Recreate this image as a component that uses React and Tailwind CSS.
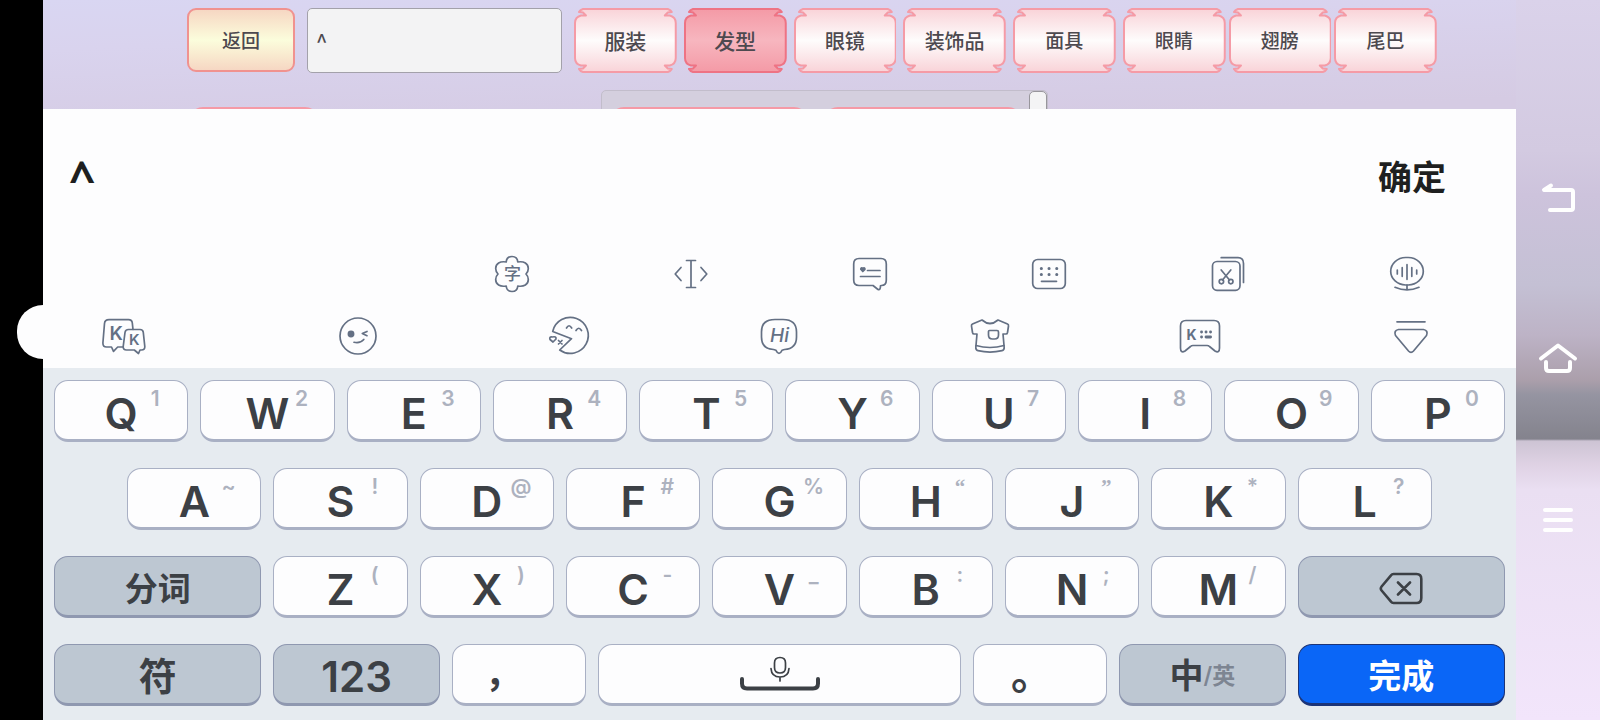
import React, { useState } from "react";
import clsx from "clsx";

const TABS = [
  { label: "服装", size: "text-[21px]", gap: "mr-[7px]" },
  { label: "发型", size: "text-[21px]", gap: "mr-[7px]" },
  { label: "眼镜", size: "text-[20px]", gap: "mr-[7px]" },
  { label: "装饰品", size: "text-[20px]", gap: "mr-[7px]" },
  { label: "面具", size: "text-[19px]", gap: "mr-[7px]" },
  { label: "眼睛", size: "text-[19px]", gap: "mr-[3px]" },
  { label: "翅膀", size: "text-[19px]", gap: "mr-[3px]" },
  { label: "尾巴", size: "text-[19px]", gap: "" },
];

const ROW_1 = ["Q1", "W2", "E3", "R4", "T5", "Y6", "U7", "I8", "O9", "P0"];
const ROW_2 = ["A~", "S!", "D@", "F#", "G%", "H“", "J”", "K*", "L?"];
const ROW_3 = ["Z(", "X)", "C-", "V_", "B:", "N;", "M/"];

const KEY_TONES = {
  light: "bg-[#fdfdfe] border-[#a9b0c4] text-[#3c4045]",
  grey: "bg-[#bdc7d2] border-[#8f98b0] text-[#3c4045]",
  blue: "bg-[#0a66f7] border-[#1c3478] text-white",
};

function TabShape({ active }) {
  const id = active ? "tab-on" : "tab-off";
  return (
    <svg className="absolute inset-0 h-full w-full" viewBox="0 0 103 65" preserveAspectRatio="none" aria-hidden="true">
      <defs>
        <linearGradient id={id} x1="0" y1="0" x2="0" y2="1">
          <stop offset="0" stopColor={active ? "#f49aa6" : "#f9d3d8"} />
          <stop offset="0.5" stopColor={active ? "#f7b6bf" : "#fefcfc"} />
          <stop offset="1" stopColor={active ? "#f49aa6" : "#f9d3d8"} />
        </linearGradient>
      </defs>
      <path
        d="M9 1H94Q97 2 98 4L94 4.500L91 7.500H96Q102 9 102 15V50Q102 56 96 57.500H91L94 60.500L98 61Q97 63 94 64H9Q6 63 5 61L9 60.500L12 57.500H7Q1 56 1 50V15Q1 9 7 7.500H12L9 4.500L5 4Q6 2 9 1Z"
        fill={`url(#${id})`}
        stroke={active ? "#ee7384" : "#f59ba6"}
        strokeWidth="2"
        strokeLinejoin="round"
      />
    </svg>
  );
}

function Icon({ children, size = 40, width = 1.7 }) {
  return (
    <svg
      width={size}
      height={size}
      viewBox={`0 0 ${size} ${size}`}
      fill="none"
      stroke="currentColor"
      strokeWidth={width}
      strokeLinecap="round"
      strokeLinejoin="round"
      aria-hidden="true"
    >
      {children}
    </svg>
  );
}

const TOOLS_TOP = [
  {
    name: "花漾字",
    icon: (
      <Icon>
        <path d="M14.200 8C14.500 4 17 2.500 20 2.500S25.500 4 25.800 8C32 7 36.300 9.500 36.300 14.500C36.300 17 35.500 18.500 34 20C35.500 21.500 36.300 23 36.300 25.500C36.300 30.500 32 33 25.800 32C25.500 36 23 37.500 20 37.500S14.500 36 14.200 32C8 33 3.700 30.500 3.700 25.500C3.700 23 4.500 21.500 6 20C4.500 18.500 3.700 17 3.700 14.500C3.700 9.500 8 7 14.200 8Z" />
        <text x="20.500" y="26" textAnchor="middle" fill="currentColor" stroke="none" fontSize="17" fontWeight="500">字</text>
      </Icon>
    ),
  },
  {
    name: "光标",
    icon: (
      <Icon>
        <path d="M15.500 6.500H24.500M20 6.500V33.500M15.500 33.500H24.500M10 13.500L4.200 20L10 26.500M30 13.500L35.800 20L30 26.500" />
      </Icon>
    ),
  },
  {
    name: "常用语",
    icon: (
      <Icon>
        <path d="M9 4.500H31Q36.300 4.500 36.300 10V26Q36.300 31.500 31.500 31.500L30.500 31.800Q30.500 36.500 28 35.500L23 31.500H9Q3.700 31.500 3.700 26V10Q3.700 4.500 9 4.500Z" />
        <path d="M17.500 16.500H30M10.500 22.500H30" />
        <path d="M12.800 17.500L10.800 15.300Q10.800 13.300 12.800 14.200Q15 13.200 14.900 15.300Z" fill="currentColor" />
      </Icon>
    ),
  },
  {
    name: "键盘",
    icon: (
      <Icon>
        <rect x="3.700" y="5.500" width="32.600" height="29" rx="5" />
        <path d="M12.500 27.300H27.500" />
        <path d="M12.300 14.500H12.400M20 14.500H20.100M27.700 14.500H27.800M12.300 20.500H12.400M20 20.500H20.100M27.700 20.500H27.800" strokeWidth="3" />
      </Icon>
    ),
  },
  {
    name: "剪贴板",
    icon: (
      <Icon>
        <rect x="4.500" y="7.500" width="27.500" height="28.800" rx="4.500" />
        <path d="M13.200 3.700H30Q35.500 3.700 35.500 9.500V28.500M13.200 16L21.500 26M22.800 16L14.500 26" />
        <circle cx="13.400" cy="27.600" r="2.200" />
        <circle cx="22.800" cy="27.600" r="2.200" />
      </Icon>
    ),
  },
  {
    name: "语音",
    icon: (
      <Icon>
        <rect x="3.700" y="3.500" width="32.600" height="27.500" rx="15" />
        <path d="M10.300 16V20M15.200 13.700V22.300M20 10.700V25.300M24.800 13.700V22.300M29.700 16V20M20 31V36M8 33.300Q20 38.500 32 33.300" />
      </Icon>
    ),
  },
];

const TOOLS_BOTTOM = [
  {
    name: "表情",
    icon: (
      <Icon size={44}>
        <circle cx="22" cy="22" r="18" />
        <circle cx="15" cy="20" r="2.600" fill="currentColor" />
        <path d="M31 17.500L26.300 19.500L31 21.700M18 28.300Q24 29.800 27.800 25.500" />
      </Icon>
    ),
  },
  {
    name: "斗图",
    icon: (
      <Icon size={44}>
        <path d="M5.700 17.500A18 18 0 1 1 12.700 36L24.500 24.700Z" />
        <path d="M19.500 14Q22 9.500 24.700 14M29 16.500Q31.700 12 34.500 16.500M11.500 26.500L15 30M15 26.500L11.500 30" />
        <path d="M6 28L3 25.500Q2 22.500 5.300 23Q9.500 22 9 25Z" />
      </Icon>
    ),
  },
  {
    name: "打招呼",
    icon: (
      <Icon size={44}>
        <path d="M18 5.500H26C35 5.500 39.500 9 39.500 18V23C39.500 31 35 35 27.500 35.500L25 36.300Q22 42.500 19 36.300L16.500 35.500C9 35 4.500 31 4.500 23V18C4.500 9 9 5.500 18 5.500Z" />
        <text x="22.500" y="28" textAnchor="middle" fill="currentColor" stroke="none" fontSize="19" fontStyle="italic" fontWeight="500">Hi</text>
      </Icon>
    ),
  },
  {
    name: "皮肤",
    icon: (
      <Icon size={44}>
        <path d="M14 6L4.500 10Q3.300 10.500 3.500 12L4.500 18.500Q4.800 20 6 20H9L7.800 33.500Q7.700 36 10 36.700Q22 39.500 34 36.700Q36.300 36 36.200 33.500L35 20H38Q39.200 20 39.500 18.500L40.500 12Q40.700 10.500 39.500 10L30 6Q22 13 14 6Z" />
        <path d="M8 31.500Q22 35.500 36 31.500M21.500 16.500H29Q30.500 16.500 30.500 18V21Q30.500 25 26.500 25H24.500Q20.500 25 20.500 21V17.500Q20.500 16.500 21.500 16.500Z" />
      </Icon>
    ),
  },
  {
    name: "游戏键盘",
    icon: (
      <Icon size={44}>
        <path d="M8 6.500H36Q41.500 6.500 41.500 12V34Q41.500 39.500 37 37L31.500 32.500Q30.500 31.500 29 31.500H15Q13.500 31.500 12.500 32.500L7 37Q2.500 39.500 2.500 34V12Q2.500 6.500 8 6.500Z" />
        <text x="8.500" y="25.800" fill="currentColor" stroke="none" fontSize="14" fontWeight="700">K</text>
        <path d="M23.500 18H23.600M28 18H28.100M32.500 18H32.600M23.500 23H23.600M28 23H32.600" strokeWidth="2.800" />
      </Icon>
    ),
  },
  {
    name: "收起",
    icon: (
      <Icon size={44}>
        <path d="M8 7.800H36" />
        <path d="M9.500 15.500H34.500Q39.500 16.500 37.500 21.500L24.500 37Q22 39.800 19.500 37L6.500 21.500Q4.500 16.500 9.500 15.500Z" />
      </Icon>
    ),
  },
];

function KIcon() {
  return (
    <Icon size={44}>
      <path d="M21 33H15.700L11.500 37.300L9.500 33H4.500Q.9 33 .9 29L2.500 9.500Q2.800 5.700 7 5.700H26.500Q30 5.700 30.300 9L31 15.300" />
      <path d="M26.500 15.500H38Q41 15.500 41.300 18.500L42.800 32.500Q43 36 39.500 36L38 36L36.500 39.500L32.300 36H24.500Q21 36 21.200 32.500L23 18.500Q23.400 15.500 26.500 15.500Z" />
      <text x="7.500" y="26" fill="currentColor" stroke="none" fontSize="19" fontWeight="600">K</text>
      <text x="27" y="31" fill="currentColor" stroke="none" fontSize="15" fontWeight="600">K</text>
    </Icon>
  );
}

function Key({ children, hint, tone = "light", className, label }) {
  return (
    <div className={clsx("px-1.5", className)}>
      <button
        type="button"
        aria-label={label}
        className={clsx(
          "relative flex h-[62px] w-full items-center justify-center rounded-[14px] border border-b-[3px] font-semibold",
          KEY_TONES[tone],
        )}
      >
        {children}
        {hint && (
          <span
            className={clsx(
              "absolute right-4 top-1 w-8 text-center text-[21px] leading-[28px] text-[#adb2bf]",
              "“”".includes(hint) && "font-['Liberation_Serif',serif]",
            )}
          >
            {hint}
          </span>
        )}
      </button>
    </div>
  );
}

function LetterKeys({ keys }) {
  return keys.map((k) => (
    <Key key={k} hint={k[1]} className="w-[10%]">
      <span className="pt-1.5 text-[43px] leading-none">{k[0]}</span>
    </Key>
  ));
}

function GameBar({ text, setText }) {
  const [tab, setTab] = useState("发型");
  return (
    <header className="flex h-[109px] flex-col overflow-hidden font-['Noto_Sans_CJK_SC',sans-serif] font-medium text-[#4d494f]">
      <div className="ml-36 mr-[79px] flex pt-2">
        <button
          type="button"
          className="mr-3 h-16 w-[108px] shrink-0 rounded-[9px] border-2 border-[#f0928f] bg-linear-to-b from-[#f6d7c3] via-[#fbfddc] to-[#f6d7c3] text-[19px]"
        >
          返回
        </button>
        <input
          aria-label="搜索"
          value={text}
          onChange={(e) => setText(e.target.value)}
          className="mr-3 h-[65px] w-[255px] shrink-0 rounded-[5px] border border-[#a3a1aa] bg-[#f3f3f4] px-2 text-[20px] outline-none"
        />
        {TABS.map((t) => (
          <button
            key={t.label}
            type="button"
            onClick={() => setTab(t.label)}
            className={clsx("relative h-[65px] min-w-0 flex-1", t.size, t.gap)}
          >
            <TabShape active={tab === t.label} />
            <span className="relative">{t.label}</span>
          </button>
        ))}
      </div>
      <div className="mt-[17px] flex flex-1 items-start pl-[146px]">
        <div className="mt-[17px] h-10 w-[130px] rounded-[14px] border-2 border-[#f59aa6] bg-[#c9b4c0]" />
        <div className="ml-[282px] flex h-16 w-[447px] rounded-t-[5px] border border-[#c2bdcb] bg-[#d4cfde]">
          <div className="ml-2 mt-4 h-10 w-[198px] rounded-[14px] border-2 border-[#f59aa6] bg-[#b9a9b2]" />
          <div className="ml-4 mt-4 h-10 w-[198px] rounded-[14px] border-2 border-[#f59aa6] bg-[#b9a9b2]" />
          <div className="ml-auto w-[18px] rounded-t-[5px] border border-[#98969c] bg-[#f4f4f5]" />
        </div>
      </div>
    </header>
  );
}

function Toolbar() {
  return (
    <nav className="bg-[#fdfdfe] text-[#647084]">
      <div className="flex h-[58px] pl-[380px] pr-5">
        {TOOLS_TOP.map((t) => (
          <button key={t.name} type="button" aria-label={t.name} className="flex flex-1 items-center justify-center">
            {t.icon}
          </button>
        ))}
      </div>
      <div className="flex h-[65px]">
        <button type="button" aria-label="字体" className="flex w-[210px] items-center pl-[59px]">
          <KIcon />
        </button>
        {TOOLS_BOTTOM.map((t) => (
          <button key={t.name} type="button" aria-label={t.name} className="flex flex-1 items-center justify-center">
            {t.icon}
          </button>
        ))}
      </div>
    </nav>
  );
}

function Keyboard() {
  return (
    <div className="flex flex-1 flex-col gap-[26px] bg-[#e6ebf0] px-[5px] pb-3.5 pt-3">
      <div className="flex">
        <LetterKeys keys={ROW_1} />
      </div>
      <div className="flex justify-center">
        <LetterKeys keys={ROW_2} />
      </div>
      <div className="flex">
        <Key tone="grey" className="w-[15%]">
          <span className="pt-1.5 text-[33px] leading-none">分词</span>
        </Key>
        <LetterKeys keys={ROW_3} />
        <Key tone="grey" label="删除" className="w-[15%]">
          <svg width="44" height="34" viewBox="0 0 44 34" fill="none" stroke="currentColor" strokeWidth="2.600" strokeLinecap="round" strokeLinejoin="round" className="mt-1">
            <path d="M14.500 3H37.500Q42.300 3 42.300 8V27Q42.300 32 37.500 32H14.500Q13 32 12 30.700L2.600 19.500Q1 17.500 2.600 15.500L12 4.300Q13 3 14.500 3ZM19 11.500L31 23.500M31 11.500L19 23.500" />
          </svg>
        </Key>
      </div>
      <div className="flex">
        <Key tone="grey" className="w-[15%]">
          <span className="pt-1 text-[38px] leading-none">符</span>
        </Key>
        <Key tone="grey" className="w-[12.2%]">
          <span className="pt-1.5 text-[42px] leading-none">123</span>
        </Key>
        <Key className="w-[10%]">
          <span className="pr-8 text-[36px] leading-none">，</span>
        </Key>
        <Key label="空格" className="flex-1">
          <svg width="84" height="40" viewBox="0 0 84 40" fill="none" stroke="currentColor" strokeLinecap="round" strokeLinejoin="round">
            <path d="M4 25V29.500Q4 34.500 9 34.500H75Q80 34.500 80 29.500V25" strokeWidth="4" />
            <path d="M42 3.500Q47.500 3.500 47.500 9V13.500Q47.500 19 42 19T36.500 13.500V9Q36.500 3.500 42 3.500ZM33 14.500Q33.500 23 42 23T51 14.500M42 23V27" strokeWidth="1.700" />
          </svg>
        </Key>
        <Key className="w-[10%]">
          <span className="pr-4 text-[42px] font-bold leading-none">。</span>
        </Key>
        <Key tone="grey" className="w-[12.2%]">
          <span className="pt-1 text-[34px] leading-none">中</span>
          <span className="pt-1 text-[23px] leading-none text-[#7d8592]">/英</span>
        </Key>
        <Key tone="blue" className="w-[15%]">
          <span className="pt-1 text-[33px] leading-none">完成</span>
        </Key>
      </div>
    </div>
  );
}

function SystemNav() {
  return (
    <aside className="flex w-[84px] shrink-0 flex-col items-center justify-center gap-[121px] bg-[linear-gradient(to_bottom,#dad2ea_0px,#d3cae1_150px,#cdc3dc_195px,#c4c0d4_285px,#bdb3c6_335px,#ab9fab_380px,#9594a1_395px,#84838d_439px,#cdc4d4_441px,#dfd2e4_465px,#eadff2_490px,#f2e5fb_720px)] text-white">
      <button type="button" aria-label="返回">
        <Icon size={40} width={4}>
          <path d="M13 6.500L6 11H33Q35 11 35 13V29Q35 31 33 31H12" />
        </Icon>
      </button>
      <button type="button" aria-label="主页">
        <Icon size={40} width={4}>
          <path d="M3 18.500L20 5.500L37 18.500M8 22V28Q8 31 11 31H29Q32 31 32 28V22" />
        </Icon>
      </button>
      <button type="button" aria-label="菜单">
        <Icon size={40} width={4}>
          <path d="M7 9H33M7 19H33M7 29H33" />
        </Icon>
      </button>
    </aside>
  );
}

export default function App() {
  const [text, setText] = useState("^");
  return (
    <div className="flex min-h-screen bg-black font-['Inter','Noto_Sans_CJK_SC',sans-serif]">
      <div className="flex w-[43px] shrink-0 items-center justify-end overflow-hidden pb-14">
        <div className="h-[54px] w-[26px] rounded-l-full bg-[#fdfdfe]" />
      </div>
      <main className="flex min-w-0 flex-1 flex-col bg-[linear-gradient(178deg,#d9d6f2_0px,#d9d3ee_50px,#d5cbe3_150px)]">
        <GameBar text={text} setText={setText} />
        <div className="flex h-[136px] items-center justify-between bg-[#fdfdfe] pl-[26px] pr-[70px] text-[34px] font-bold text-[#1e1f20]">
          <span className="font-['Noto_Sans',sans-serif] text-[46px]">{text}</span>
          <button type="button">确定</button>
        </div>
        <Toolbar />
        <Keyboard />
      </main>
      <SystemNav />
    </div>
  );
}
